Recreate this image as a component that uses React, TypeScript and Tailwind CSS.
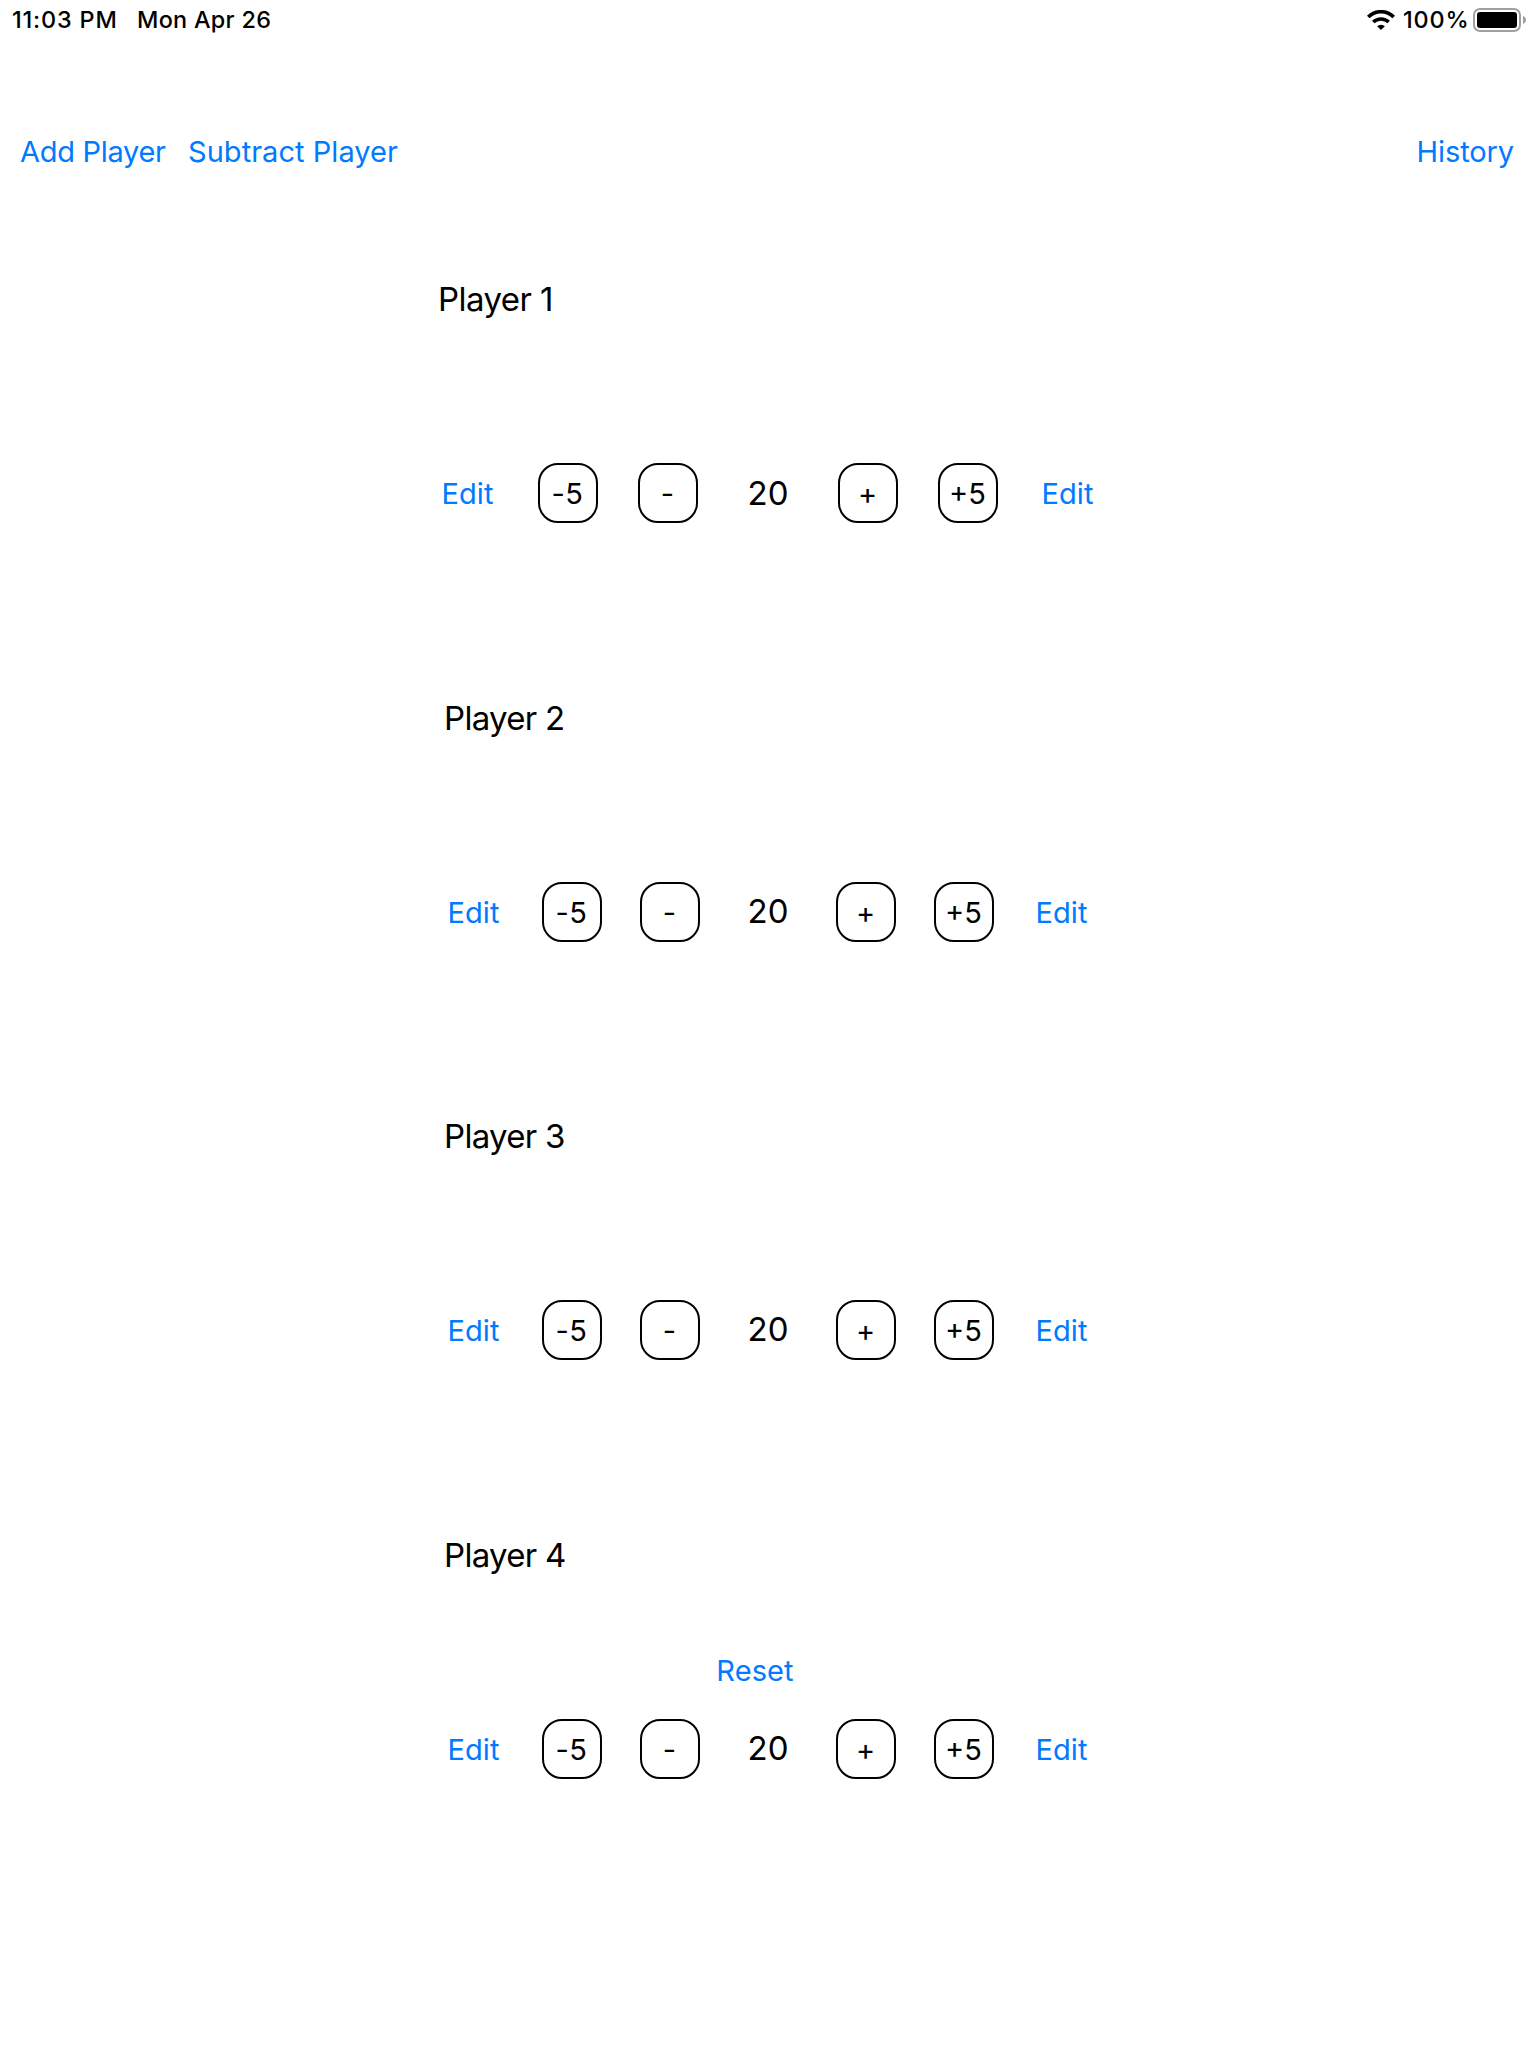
import React from 'react';

type Player = { name: string; score: number };

const players: Player[] = [
  { name: 'Player 1', score: 20 },
  { name: 'Player 2', score: 20 },
  { name: 'Player 3', score: 20 },
  { name: 'Player 4', score: 20 },
];

function WifiIcon() {
  return (
    <svg width="28" height="20" viewBox="0 0 28 20" className="block" fill="none" stroke="#000">
      <path d="M1.3 7a18 18 0 0 1 25.4 0" strokeWidth="3.7" />
      <path d="M6.3 12.100a11 11 0 0 1 15.400 0" strokeWidth="3.500" />
      <path d="M14 20l-3.900-3.700a5.400 5.400 0 0 1 7.800 0z" fill="#000" stroke="none" />
    </svg>
  );
}

function BatteryIcon() {
  return (
    <svg width="54" height="24" viewBox="0 0 54 24" className="block">
      <rect x="1" y="1" width="46" height="22" rx="6" fill="none" stroke="#a0a0a0" strokeWidth="2" />
      <rect x="4" y="4" width="40" height="16" rx="3" fill="#000" />
      <path d="M50 8c1.9.6 3 2.2 3 4s-1.100 3.400-3 4z" fill="#a0a0a0" />
    </svg>
  );
}

function StatusBar() {
  return (
    <div className="flex h-10 items-center justify-between pl-[12px] pr-[9px] text-[23.4px] font-medium leading-[28px]">
      <div className="flex">
        <span className="w-[125px] tracking-[0.84px]">11:03 PM</span>
        <span className="tracking-[0.3px]">Mon Apr 26</span>
      </div>
      <div className="flex items-center">
        <WifiIcon />
        <span className="ml-[8px] w-[70px] tracking-[0.9px]">100%</span>
        <BatteryIcon />
      </div>
    </div>
  );
}

function Step({ label, tracking = '' }: { label: string; tracking?: string }) {
  return (
    <button className={`flex h-[60px] w-[60px] items-center justify-center rounded-[20px] border-2 border-black pr-[1px] pt-[2px] text-[29px] leading-[36px] ${tracking}`}>
      {label}
    </button>
  );
}

function Edit() {
  return <button className="w-[60px] pr-[1px] pt-[2px] text-center text-[29px] leading-[36px] tracking-[0.1px] text-[#007aff]">Edit</button>;
}

function PlayerSection({ player, wide, children }: { player: Player; wide: boolean; children?: React.ReactNode }) {
  return (
    <section className="flex h-[418.67px] flex-col items-center">
      <div className={wide ? 'w-[660px]' : 'w-[648px]'}>
        <h2 className={`h-10 text-[33px] leading-[40px] ${wide ? 'tracking-[-0.57px]' : 'tracking-[-0.7px]'}`}>{player.name}</h2>
        <div className="flex h-[144px] justify-center">{children}</div>
        <div className="flex items-center justify-between">
          <Edit />
          <Step label="-5" tracking="tracking-[0.4px]" />
          <Step label="-" />
          <span className={`w-[60px] text-center text-[33px] leading-[40px] ${wide ? '' : 'pb-[2px]'}`}>{player.score}</span>
          <Step label="+" />
          <Step label="+5" />
          <Edit />
        </div>
      </div>
    </section>
  );
}

export default function App() {
  return (
    <div className="h-[2048px] w-[1536px] overflow-hidden bg-white font-['Inter',sans-serif] text-black">
      <StatusBar />
      <nav className="mt-[92px] flex h-10 items-center pl-[20px] pr-[22px] text-[29px] leading-[36px] text-[#007aff]">
        <button className="w-[168px] whitespace-nowrap text-left tracking-[-0.3px]">Add Player</button>
        <button className="whitespace-nowrap tracking-[0.04px]">Subtract Player</button>
        <button className="ml-auto tracking-[-0.1px]">History</button>
      </nav>
      <main className="mt-[107px]">
        {players.map((p, i) => (
          <PlayerSection key={p.name} player={p} wide={i === 0}>
            {i === players.length - 1 && (
              <button className="mr-[26px] mt-[78px] h-9 text-[29px] leading-[36px] tracking-[0.1px] text-[#007aff]">Reset</button>
            )}
          </PlayerSection>
        ))}
      </main>
    </div>
  );
}
